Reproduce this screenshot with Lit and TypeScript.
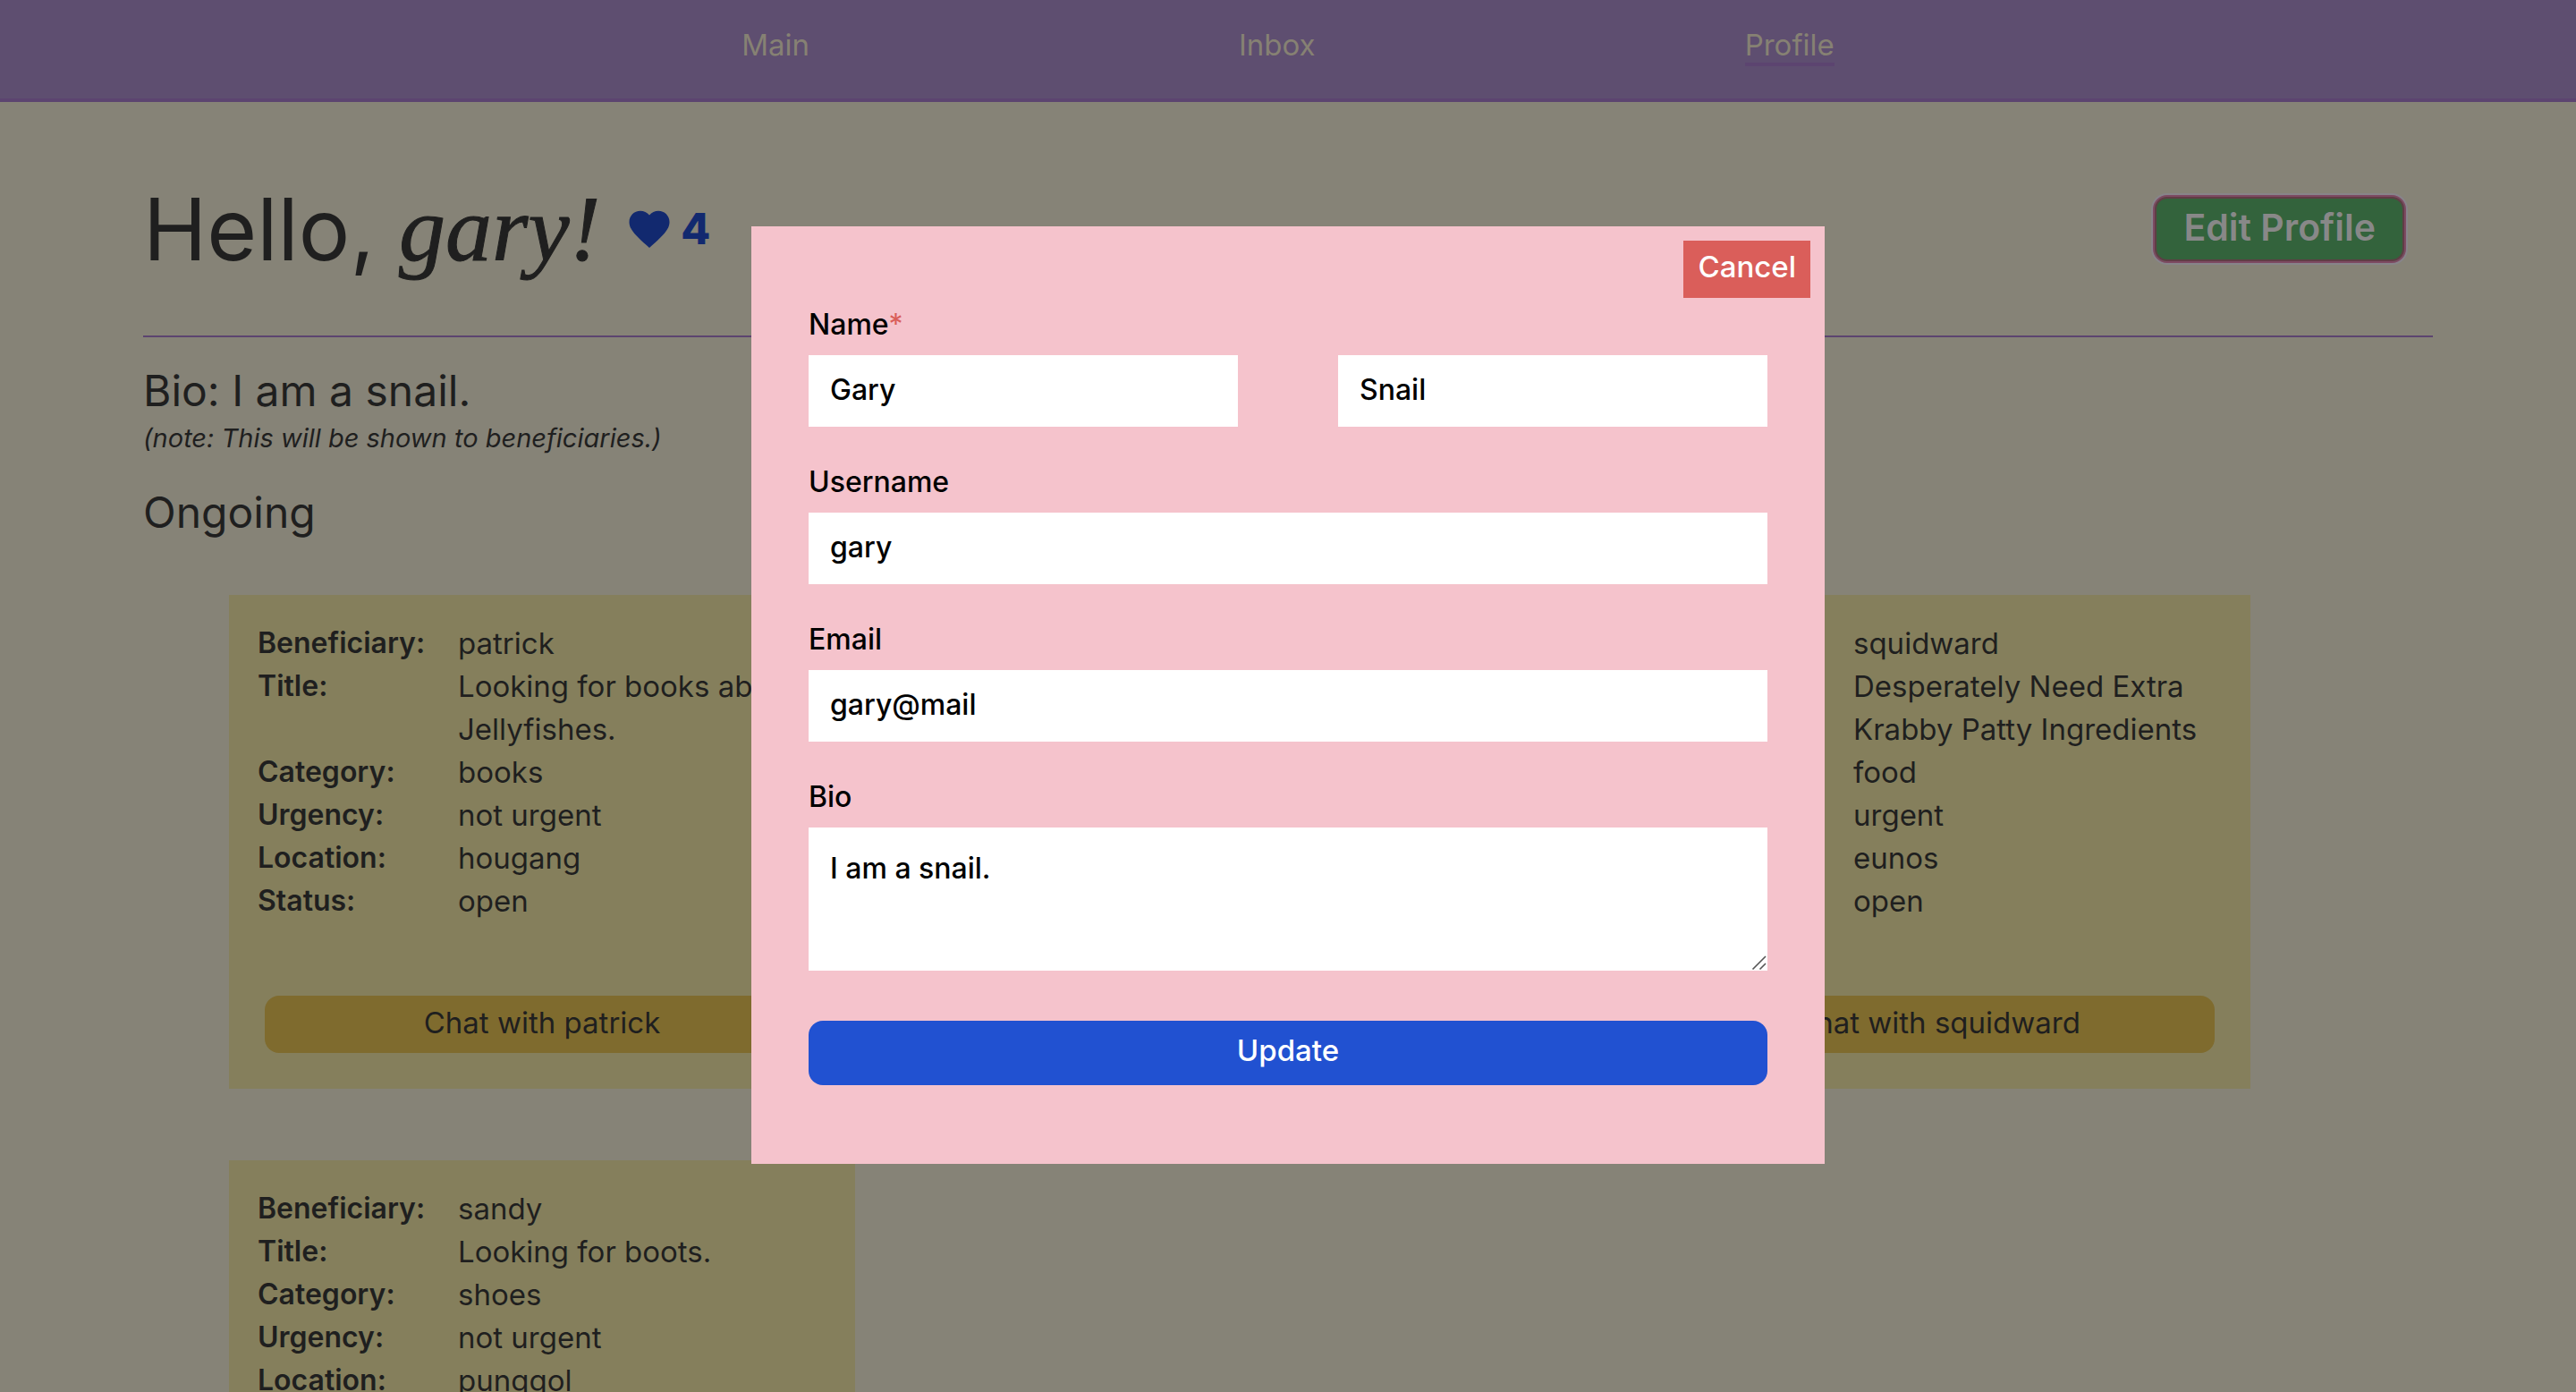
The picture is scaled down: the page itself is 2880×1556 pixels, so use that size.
import { LitElement, html, css } from "lit";
import { customElement } from "lit/decorators.js";

interface Deal {
  beneficiary: string;
  title: string;
  category: string;
  urgency: string;
  location: string;
  status: string;
}

const deals: Deal[] = [
  { beneficiary: "patrick", title: "Looking for books about Jellyfishes.", category: "books", urgency: "not urgent", location: "hougang", status: "open" },
  { beneficiary: "squidward", title: "Desperately Need Extra Krabby Patty Ingredients", category: "food", urgency: "urgent", location: "eunos", status: "open" },
  { beneficiary: "sandy", title: "Looking for boots.", category: "shoes", urgency: "not urgent", location: "punggol", status: "open" },
];

@customElement("app-root")
export class AppRoot extends LitElement {
  static styles = css`
    :host {
      display: block;
      height: 100vh;
      overflow: hidden;
      background: #868377;
      color: #1f1f1f;
      font-family: Inter, "Liberation Sans", sans-serif;
      font-size: 32px;
      line-height: 48px;
    }
    * { box-sizing: border-box; }
    button, input, textarea { font: inherit; border: 0; margin: 0; border-radius: 0; }
    button { cursor: pointer; }
    h1, h2, p, dl, dd { margin: 0; font-weight: 400; }

    .nav {
      display: flex;
      justify-content: center;
      gap: 480px;
      padding: 30px 0 36px;
      background: #5e4e70;
      border-bottom: 4px solid #5c4470;
      font-size: 33px;
      line-height: 40px;
    }
    .nav a {
      color: #868173;
      text-decoration: none;
      border-bottom: 4px solid transparent;
    }
    .nav a.active { border-color: #5c4470; }

    main { padding: 0 160px; }
    .hero {
      display: flex;
      align-items: center;
      justify-content: space-between;
      height: 263px;
      padding: 22px 30px 0 0;
      border-bottom: 2px solid #5c4470;
      margin-bottom: 32px;
    }
    .greeting { display: flex; align-items: center; gap: 28px; }
    h1 { font-size: 96px; line-height: 120px; }
    h1 em {
      font-family: "Liberation Serif", serif;
      font-size: 104px;
      -webkit-text-stroke: 1px currentColor;
    }
    .likes {
      display: flex;
      align-items: center;
      gap: 8px;
      font-size: 48px;
      font-weight: 800;
      color: #12296f;
    }
    .likes svg { width: 54px; height: 54px; fill: currentColor; }
    .edit {
      padding: 10px 32px 14px;
      border: 2px solid #7d4a62;
      border-radius: 16px;
      box-shadow: inset 0 0 0 2px #5f3d45, 0 0 0 2px #87848a;
      background: #33633c;
      color: #888888;
      font-size: 41px;
      font-weight: 600;
    }
    h2 { font-size: 48px; line-height: 56px; }
    .note { font-size: 29px; font-style: italic; line-height: 50px; margin-bottom: 30px; }

    .deals {
      display: grid;
      grid-template-columns: repeat(3, 700px);
      gap: 80px;
      padding: 64px 96px;
    }
    .deal {
      display: flex;
      flex-direction: column;
      justify-content: space-between;
      min-height: 552px;
      padding: 30px 32px 40px;
      background: #857f5c;
    }
    .deal:nth-child(2) { grid-column: 3; }
    .deal dl { display: grid; grid-template-columns: 224px 1fr; }
    .deal dt { font-weight: 600; }
    .deal dd, .chat { font-size: 33px; }
    .chat {
      height: 64px;
      margin: 0 8px;
      padding-bottom: 6px;
      border-radius: 16px;
      background: #7f6b2e;
      color: inherit;
    }

    .overlay {
      position: fixed;
      inset: 0;
      display: flex;
      align-items: center;
      justify-content: center;
      padding-bottom: 2px;
      color: #000;
      font-weight: 500;
    }
    .modal {
      width: 1200px;
      padding: 16px 16px 88px;
      background: #f5c3cc;
    }
    .bar { display: flex; justify-content: flex-end; }
    .cancel, .update {
      padding: 0 16px 6px;
      color: #fff;
      font-size: 33px;
    }
    .cancel { height: 64px; background: #da5e5a; }
    form { display: flex; flex-direction: column; gap: 38px; padding: 6px 48px 0; }
    .field { display: flex; flex-direction: column; gap: 10px; }
    .star { color: #da5e5a; font-weight: 400; }
    .pair { display: flex; justify-content: space-between; gap: 112px; }
    input, textarea {
      width: 100%;
      min-width: 0;
      padding: 0 24px 4px;
      background: #fff;
      color: #000;
      outline: none;
    }
    input { height: 80px; }
    .area { position: relative; }
    textarea { display: block; height: 160px; padding: 22px 24px; resize: none; }
    .grip {
      position: absolute;
      right: 0;
      bottom: 0;
      width: 18px;
      height: 18px;
      fill: none;
      stroke: #555;
      stroke-width: 1.6;
    }
    .update {
      height: 72px;
      margin-top: 18px;
      border-radius: 16px;
      background: #2151d1;
    }
  `;

  private dealCard(d: Deal) {
    return html`
      <article class="deal">
        <dl>
          <dt>Beneficiary:</dt><dd>${d.beneficiary}</dd>
          <dt>Title:</dt><dd>${d.title}</dd>
          <dt>Category:</dt><dd>${d.category}</dd>
          <dt>Urgency:</dt><dd>${d.urgency}</dd>
          <dt>Location:</dt><dd>${d.location}</dd>
          <dt>Status:</dt><dd>${d.status}</dd>
        </dl>
        <button class="chat">Chat with ${d.beneficiary}</button>
      </article>
    `;
  }

  render() {
    return html`
      <nav class="nav">
        <a href="#main">Main</a>
        <a href="#inbox">Inbox</a>
        <a href="#profile" class="active">Profile</a>
      </nav>
      <main>
        <header class="hero">
          <div class="greeting">
            <h1>Hello, <em>gary!</em></h1>
            <div class="likes">
              <svg viewBox="0 0 24 24" aria-hidden="true">
                <path d="M12 21.35l-1.45-1.32C5.4 15.36 2 12.28 2 8.5 2 5.42 4.42 3 7.5 3c1.74 0 3.41.81 4.5 2.09C13.09 3.81 14.76 3 16.5 3 19.58 3 22 5.42 22 8.5c0 3.78-3.4 6.86-8.55 11.54L12 21.35z"></path>
              </svg>
              <span>4</span>
            </div>
          </div>
          <button class="edit">Edit Profile</button>
        </header>
        <h2>Bio: I am a snail.</h2>
        <p class="note">(note: This will be shown to beneficiaries.)</p>
        <h2>Ongoing</h2>
        <section class="deals">${deals.map((d) => this.dealCard(d))}</section>
      </main>
      <div class="overlay">
        <div class="modal" role="dialog" aria-modal="true">
          <div class="bar"><button class="cancel">Cancel</button></div>
          <form>
            <div class="field">
              <label for="first">Name<span class="star">*</span></label>
              <div class="pair">
                <input id="first" type="text" value="Gary" />
                <input type="text" aria-label="Name" value="Snail" />
              </div>
            </div>
            <div class="field">
              <label for="username">Username</label>
              <input id="username" type="text" value="gary" />
            </div>
            <div class="field">
              <label for="email">Email</label>
              <input id="email" type="text" value="gary@mail" />
            </div>
            <div class="field">
              <label for="bio">Bio</label>
              <div class="area">
                <textarea id="bio" .value=${"I am a snail."}></textarea>
                <svg class="grip" viewBox="0 0 18 18" aria-hidden="true">
                  <path d="M1.5 16.5L16 2M9.5 16.5L16 10"></path>
                </svg>
              </div>
            </div>
            <button class="update" type="button">Update</button>
          </form>
        </div>
      </div>
    `;
  }
}
